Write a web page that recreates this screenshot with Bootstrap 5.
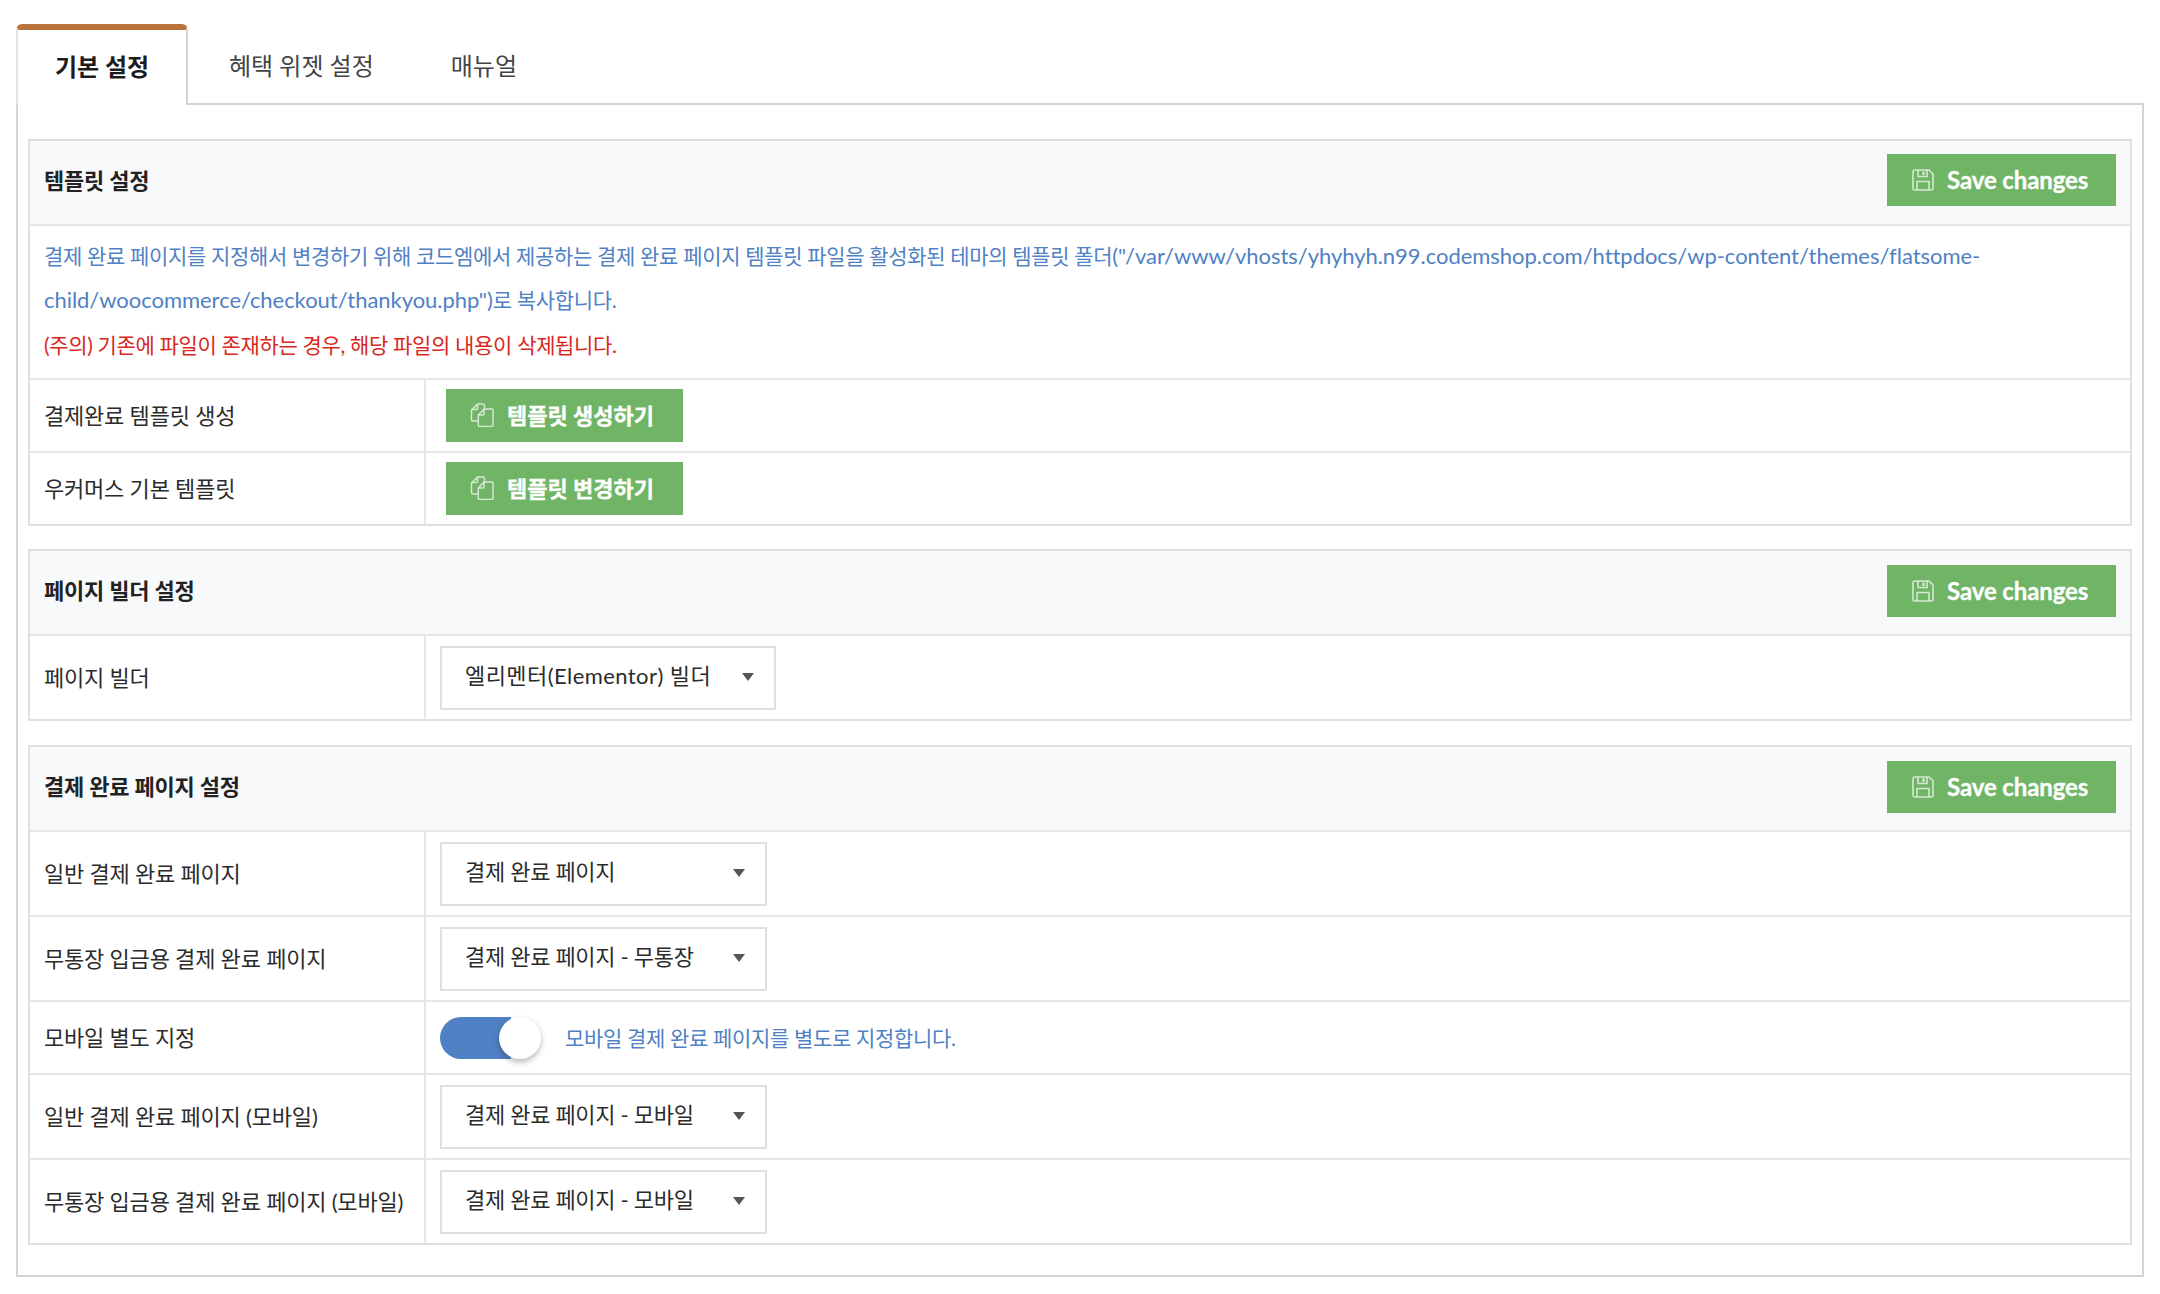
<!DOCTYPE html>
<html lang="ko">
<head>
  <meta charset="UTF-8" />
  <meta name="viewport" content="width=device-width, initial-scale=1.0"/>
  <title>결제 완료 페이지 설정</title>
  <link rel="stylesheet" href="https://cdn.jsdelivr.net/npm/bootstrap@5.3.3/dist/css/bootstrap.min.css"/>
  <style>
    body {
      font-family: Lato, "Noto Sans CJK KR", sans-serif;
      font-size: 22px;
      color: #2b2b2b;
      background-color: #fff;
      padding: 24px 16px 17px;
    }
    .tabs-top {
      border-bottom: 2px solid #d4d4d4;
      gap: 0;
    }
    .tabs-top .nav-link {
      font-size: 24px;
      line-height: 36px;
      color: #444;
      border: 0;
      border-radius: 0;
      padding: 24px 36px 0 41px;
      height: 79px;
      margin-bottom: 0;
    }
    .tabs-top .nav-link.active {
      font-weight: 700;
      color: #1c1c1c;
      width: 172px;
      padding: 19px 0 0;
      text-align: center;
      background: #fff;
      border-top: 6px solid #b9733a;
      border-left: 2px solid #e2e2e2;
      border-right: 2px solid #d4d4d4;
      border-radius: 6px 6px 0 0;
      height: 81px;
      margin-bottom: -2px;
    }
    .tab-box {
      border: 2px solid #d4d4d4;
      border-top: 0;
      padding: 34px 10px 30px;
    }
    .set-box {
      border: 2px solid #e0e0e0;
      border-radius: 0;
      margin-bottom: 23px;
    }
    .set-box:last-child { margin-bottom: 0; margin-top: 24px; }
    .set-head {
      background: #f8f9fb;
      border-bottom: 2px solid #e6e6e6;
      height: 85px;
      padding: 0 14px 5px;
    }
    .set-box + .set-box .set-head { padding-bottom: 3px; }
    .set-title {
      font-size: 22px;
      font-weight: 700;
      color: #222;
      letter-spacing: -.2px;
    }
    .btn-grn {
      background: #70b565;
      color: #fff;
      border: 0;
      border-radius: 0;
      font-weight: 700;
      display: inline-flex;
      align-items: center;
      -webkit-text-stroke: .3px #fff;
    }
    .btn-grn:hover { background: #70b565; color: #fff; }
    .btn-save {
      font-size: 24px;
      height: 52px;
      width: 229px;
      padding: 0 0 0 25px;
      gap: 13px;
      letter-spacing: -.1px;
    }
    .btn-tpl {
      font-size: 22px;
      height: 53px;
      width: 237px;
      padding: 0 0 0 24px;
      gap: 13px;
    }
    .btn-grn svg { flex: none; opacity: .7; }
    .info-box {
      padding: 8px 14px 11px;
      line-height: 44.3px;
      color: #4f81c4;
      border-bottom: 2px solid #e6e6e6;
      font-size: 21px;
      letter-spacing: -.33px;
    }
    .info-path { font-size: 22px; letter-spacing: -.04px; }
    .info-red { color: #d9281e; }
    .set-table { margin: 0; table-layout: fixed; }
    .set-table td {
      border-bottom: 2px solid #e6e6e6;
      padding: 10px 14px 9px;
      vertical-align: middle;
      color: #2b2b2b;
      background: #fff;
      box-shadow: none;
      letter-spacing: -.2px;
    }
    .set-table tr:last-child td { border-bottom: 0; }
    .set-table td:first-child {
      width: 395px;
      padding: 0 0 0 14px;
      border-right: 2px solid #e6e6e6;
      white-space: nowrap;
    }
    .set-table td.cell-btn { padding: 9px 0 9px 20px; }
    .set-table td.cell-toggle { padding: 15px 14px 14px; }
    .sel-box {
      font-family: inherit;
      font-size: 22px;
      color: #2b2b2b;
      letter-spacing: -.3px;
      height: 64px;
      width: 327px;
      padding: 0 40px 4px 23px;
      border: 2px solid #e0e0e0;
      border-radius: 0;
      background-size: 12px 8px;
      background-position: right 20px top 25px;
      background-image: url("data:image/svg+xml,%3Csvg xmlns='http://www.w3.org/2000/svg' viewBox='0 0 12 8'%3E%3Cpath fill='%23555' d='M0 0h12L6 8z'/%3E%3C/svg%3E");
    }
    .sel-wide { width: 336px; letter-spacing: .43px; }
    .toggle-track {
      width: 101px;
      height: 42px;
      border-radius: 21px;
      background: linear-gradient(90deg, #4f81c4 70%, transparent 70%);
    }
    .toggle-knob {
      width: 42px;
      height: 42px;
      border-radius: 50%;
      background: #fff;
      box-shadow: 0 3px 6px rgba(0,0,0,.28);
    }
    .toggle-note { color: #4f81c4; font-size: 21px; letter-spacing: -.33px; }
  </style>
</head>
<body>

<ul class="nav tabs-top">
  <li class="nav-item"><a class="nav-link active" href="#">기본 설정</a></li>
  <li class="nav-item"><a class="nav-link" href="#">혜택 위젯 설정</a></li>
  <li class="nav-item"><a class="nav-link" href="#">매뉴얼</a></li>
</ul>

<div class="tab-box">

  <!-- 템플릿 설정 -->
  <div class="set-box">
    <div class="set-head d-flex align-items-center justify-content-between">
      <span class="set-title">템플릿 설정</span>
      <button class="btn btn-grn btn-save" type="button">
        <svg width="22" height="22" viewBox="0 0 22 22" fill="none" stroke="#fff" stroke-width="1.6"><path d="M2.500 1h14.500l4 4v14.500a1.500 1.500 0 0 1-1.500 1.500h-17a1.500 1.500 0 0 1-1.500-1.500v-17a1.500 1.500 0 0 1 1.500-1.500z"/><path d="M6 1v6.500h9V1"/><path d="M5 21v-8.500h12V21"/><path d="M11.500 2.500v3.500" stroke-width="2.4"/></svg>
        Save changes
      </button>
    </div>
    <div class="info-box">
      결제 완료 페이지를 지정해서 변경하기 위해 코드엠에서 제공하는 결제 완료 페이지 템플릿 파일을 활성화된 테마의 템플릿 폴더<span class="info-path">("/var/www/vhosts/yhyhyh.n99.codemshop.com/httpdocs/wp-content/themes/flatsome-<br>child/woocommerce/checkout/thankyou.php")</span>로 복사합니다.<br>
      <span class="info-red">(주의) 기존에 파일이 존재하는 경우, 해당 파일의 내용이 삭제됩니다.</span>
    </div>
    <table class="table set-table">
      <tr>
        <td>결제완료 템플릿 생성</td>
        <td class="cell-btn">
          <button class="btn btn-grn btn-tpl" type="button">
            <svg width="24" height="24" viewBox="0 0 24 24" fill="none" stroke="#fff" stroke-width="1.5"><path d="M8 18H3a1.500 1.500 0 0 1-1.500-1.500V7L7.500 1H13a1.500 1.500 0 0 1 1.500 1.500V6"/><path d="M7.500 1v4.500a1 1 0 0 1-1 1H1.500"/><path d="M14 6h8a1.200 1.200 0 0 1 1 1.200v15a1.200 1.200 0 0 1-1 1.200H9.500a1.200 1.200 0 0 1-1.200-1.200V12z"/><path d="M14 6v5a1 1 0 0 1-1 1H8.500"/></svg>
            템플릿 생성하기
          </button>
        </td>
      </tr>
      <tr>
        <td>우커머스 기본 템플릿</td>
        <td class="cell-btn">
          <button class="btn btn-grn btn-tpl" type="button">
            <svg width="24" height="24" viewBox="0 0 24 24" fill="none" stroke="#fff" stroke-width="1.5"><path d="M8 18H3a1.500 1.500 0 0 1-1.500-1.500V7L7.500 1H13a1.500 1.500 0 0 1 1.500 1.500V6"/><path d="M7.500 1v4.500a1 1 0 0 1-1 1H1.500"/><path d="M14 6h8a1.200 1.200 0 0 1 1 1.200v15a1.200 1.200 0 0 1-1 1.200H9.500a1.200 1.200 0 0 1-1.200-1.200V12z"/><path d="M14 6v5a1 1 0 0 1-1 1H8.500"/></svg>
            템플릿 변경하기
          </button>
        </td>
      </tr>
    </table>
  </div>

  <!-- 페이지 빌더 설정 -->
  <div class="set-box">
    <div class="set-head d-flex align-items-center justify-content-between">
      <span class="set-title">페이지 빌더 설정</span>
      <button class="btn btn-grn btn-save" type="button">
        <svg width="22" height="22" viewBox="0 0 22 22" fill="none" stroke="#fff" stroke-width="1.6"><path d="M2.500 1h14.500l4 4v14.500a1.500 1.500 0 0 1-1.500 1.500h-17a1.500 1.500 0 0 1-1.500-1.500v-17a1.500 1.500 0 0 1 1.500-1.500z"/><path d="M6 1v6.500h9V1"/><path d="M5 21v-8.500h12V21"/><path d="M11.500 2.500v3.500" stroke-width="2.4"/></svg>
        Save changes
      </button>
    </div>
    <table class="table set-table">
      <tr>
        <td>페이지 빌더</td>
        <td><select class="form-select sel-box sel-wide"><option>엘리멘터(Elementor) 빌더</option></select></td>
      </tr>
    </table>
  </div>

  <!-- 결제 완료 페이지 설정 -->
  <div class="set-box">
    <div class="set-head d-flex align-items-center justify-content-between">
      <span class="set-title">결제 완료 페이지 설정</span>
      <button class="btn btn-grn btn-save" type="button">
        <svg width="22" height="22" viewBox="0 0 22 22" fill="none" stroke="#fff" stroke-width="1.6"><path d="M2.500 1h14.500l4 4v14.500a1.500 1.500 0 0 1-1.500 1.500h-17a1.500 1.500 0 0 1-1.500-1.500v-17a1.500 1.500 0 0 1 1.500-1.500z"/><path d="M6 1v6.500h9V1"/><path d="M5 21v-8.500h12V21"/><path d="M11.500 2.500v3.500" stroke-width="2.4"/></svg>
        Save changes
      </button>
    </div>
    <table class="table set-table">
      <tr>
        <td>일반 결제 완료 페이지</td>
        <td><select class="form-select sel-box"><option>결제 완료 페이지</option></select></td>
      </tr>
      <tr>
        <td>무통장 입금용 결제 완료 페이지</td>
        <td><select class="form-select sel-box"><option>결제 완료 페이지 - 무통장</option></select></td>
      </tr>
      <tr>
        <td>모바일 별도 지정</td>
        <td class="cell-toggle">
          <div class="d-flex align-items-center gap-4">
            <div class="toggle-track d-flex justify-content-end"><div class="toggle-knob"></div></div>
            <span class="toggle-note">모바일 결제 완료 페이지를 별도로 지정합니다.</span>
          </div>
        </td>
      </tr>
      <tr>
        <td>일반 결제 완료 페이지 (모바일)</td>
        <td><select class="form-select sel-box"><option>결제 완료 페이지 - 모바일</option></select></td>
      </tr>
      <tr>
        <td>무통장 입금용 결제 완료 페이지 (모바일)</td>
        <td><select class="form-select sel-box"><option>결제 완료 페이지 - 모바일</option></select></td>
      </tr>
    </table>
  </div>

</div>

<script src="https://cdn.jsdelivr.net/npm/bootstrap@5.3.3/dist/js/bootstrap.bundle.min.js"></script>
</body>
</html>
